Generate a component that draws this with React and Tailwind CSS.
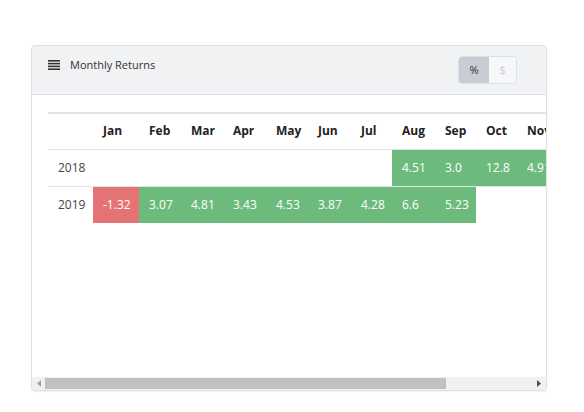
import React from "react";

const months = ["Jan","Feb","Mar","Apr","May","Jun","Jul","Aug","Sep","Oct","Nov","Dec"];
const widths = [46,42,42,43,42,43,41,43,41,41,42,42];
const data = {
  "2018": [null,null,null,null,null,null,null,4.51,"3.0",12.8,4.91,2.11],
  "2019": [-1.32,3.07,4.81,3.43,4.53,3.87,4.28,6.6,5.23,null,null,null],
};

function Cell({ v, w }) {
  if (v === null) return <td style={{ width: w }} className="h-[37px]" />;
  const neg = typeof v === "number" && v < 0;
  return (
    <td
      style={{ width: w }}
      className={`h-[37px] pl-[10px] text-left text-[12px] text-white whitespace-nowrap ${neg ? "bg-[#e57373]" : "bg-[#6cbb7c]"}`}
    >
      {String(v)}
    </td>
  );
}

export default function App() {
  return (
    <div className="w-[584px] h-[412px] bg-white pt-[45px] pl-[31px]" style={{ fontFamily: '"Open Sans", "Noto Sans", sans-serif' }}>
      <div className="w-[516px] h-[346px] border border-[#dcdfe3] rounded-[4px] shadow-[0_1px_2px_rgba(0,0,0,0.06)] flex flex-col overflow-hidden bg-white">
        <div className="h-[49px] bg-[#f0f2f4] border-b border-[#dcdfe3] flex items-start justify-between pl-[16px] pr-[29px] shrink-0">
          <div className="flex items-center gap-[10px] pt-[11px]">
            <svg width="12" height="10" viewBox="0 0 12 10">
              <rect x="0" y="0" width="12" height="1.6" fill="#333" />
              <rect x="0" y="2.8" width="12" height="1.6" fill="#333" />
              <rect x="0" y="5.6" width="12" height="1.6" fill="#333" />
              <rect x="0" y="8.4" width="12" height="1.6" fill="#333" />
            </svg>
            <span className="text-[11px] text-[#333]">Monthly Returns</span>
          </div>
          <div className="mt-[10px] flex h-[28px] border border-[#dcdfe3] rounded-[4px] overflow-hidden">
            <div className="w-[30px] bg-[#c9cdd3] flex items-center justify-center text-[11px] text-[#333]">%</div>
            <div className="w-[27px] bg-[#f6f7f8] flex items-center justify-center text-[11px] text-[#c8ccd0]">$</div>
          </div>
        </div>
        <div className="flex-1 overflow-hidden">
          <div className="pl-[16px] pt-[17px] w-max">
            <table className="border-collapse table-fixed">
              <thead>
                <tr className="border-t-2 border-b border-[#e2e4e7]">
                  <th className="w-[45px] h-[36px]" />
                  {months.map((m, i) => (
                    <th key={m} style={{ width: widths[i] }} className="h-[36px] pl-[10px] text-left text-[12px] font-bold text-[#222]">
                      {m}
                    </th>
                  ))}
                </tr>
              </thead>
              <tbody>
                {Object.keys(data).map((y, r) => (
                  <tr key={y} className={r === 0 ? "border-b border-[#e2e4e7]" : ""}>
                    <td className="w-[45px] h-[37px] pl-[10px] text-[12px] text-[#444]">{y}</td>
                    {data[y].map((v, i) => (
                      <Cell key={i} v={v} w={widths[i]} />
                    ))}
                  </tr>
                ))}
              </tbody>
            </table>
          </div>
        </div>
        <div className="h-[13px] shrink-0 bg-[#f1f1f1] flex items-stretch">
          <div className="w-[13px] flex items-center justify-center">
            <svg width="4" height="7" viewBox="0 0 4 7"><polygon points="4,0 4,7 0,3.5" fill="#a3a3a3" /></svg>
          </div>
          <div className="flex-1 flex items-stretch py-[1px] pr-[1px]">
            <div className="w-[401px] bg-[#c1c1c1]" />
          </div>
          <div className="w-[14px] flex items-center justify-center">
            <svg width="4" height="7" viewBox="0 0 4 7"><polygon points="0,0 0,7 4,3.5" fill="#505050" /></svg>
          </div>
        </div>
      </div>
    </div>
  );
}
